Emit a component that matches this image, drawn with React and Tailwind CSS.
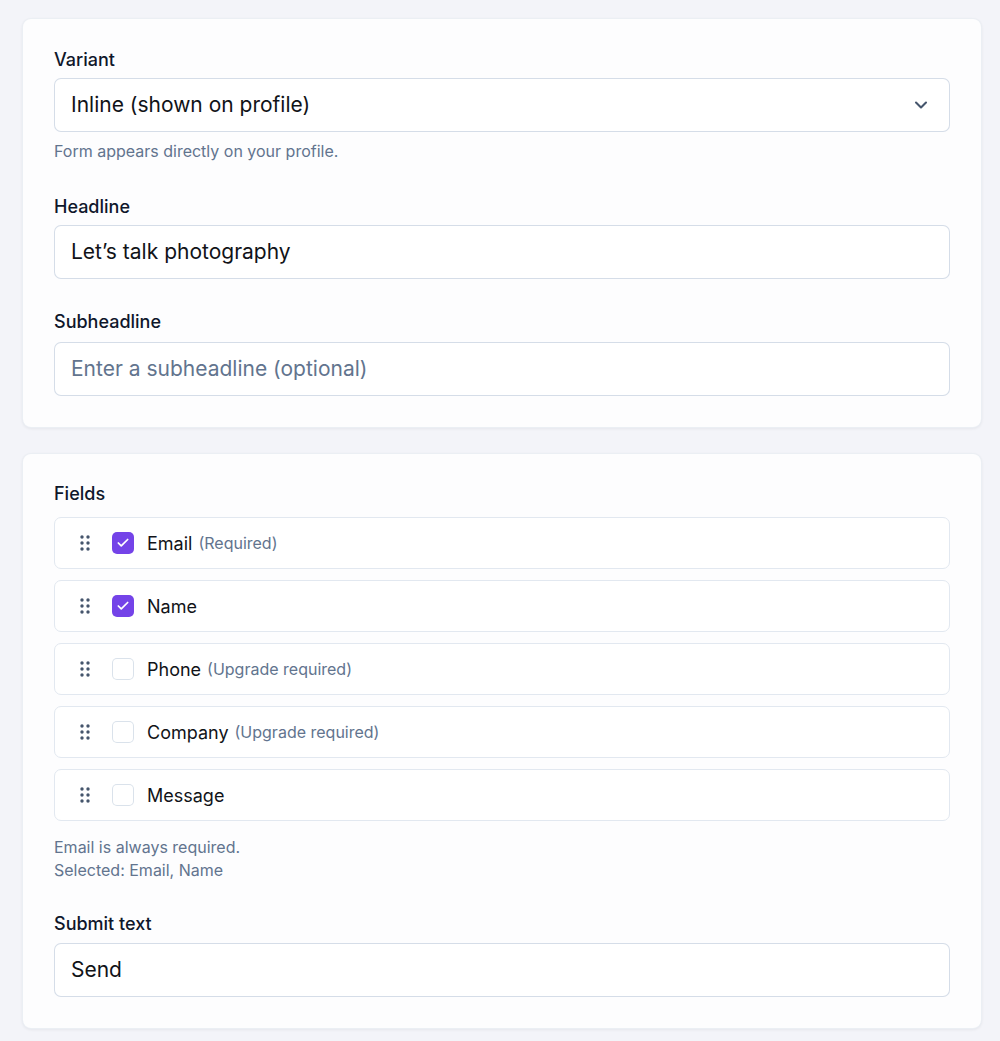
import { ChevronDown, Check } from "lucide-react";

const fields = [
  { name: "Email", note: "(Required)", checked: true },
  { name: "Name", checked: true },
  { name: "Phone", note: "(Upgrade required)", checked: false },
  { name: "Company", note: "(Upgrade required)", checked: false },
  { name: "Message", checked: false },
];

function Grip() {
  return (
    <svg width="10" height="16" viewBox="0 0 10 16" className="text-slate-600">
      {[2, 8, 14].map((y) =>
        [2, 8].map((x) => <circle key={`${x}-${y}`} cx={x} cy={y} r="1.7" fill="currentColor" />)
      )}
    </svg>
  );
}

function Label({ children, className = "mb-[6px]" }) {
  return <div className={`text-[18px] font-medium text-slate-900 leading-[24px] ${className}`}>{children}</div>;
}

function TextBox({ value, placeholder }) {
  return (
    <div className="h-[54px] rounded-[7px] border border-slate-300/80 bg-white px-[16px] flex items-center text-[21px]">
      {value ? <span className="text-[#111318]">{value}</span> : <span className="text-slate-500">{placeholder}</span>}
    </div>
  );
}

export default function App() {
  return (
    <div
      className="min-h-[1041px] bg-[#f3f4f9] px-[22px] pt-[18px] pb-[13px] flex flex-col gap-[25px] w-[1004px]"
      style={{ fontFamily: "Inter, 'Noto Sans', sans-serif" }}
    >
      <div className="bg-[#fdfdfe] rounded-[9px] border border-slate-200/70 shadow-[0_1px_3px_rgba(15,23,42,0.06)] px-[31px] pt-[29px] pb-[31px]">
        <Label>Variant</Label>
        <div className="h-[54px] rounded-[7px] border border-slate-300/80 bg-white pl-[16px] pr-[18px] flex items-center justify-between text-[21px] text-[#111318]">
          <span>Inline (shown on profile)</span>
          <ChevronDown className="w-[20px] h-[20px] text-slate-600" strokeWidth={2.5} />
        </div>
        <p className="text-[16px] text-slate-500 mt-[8px] leading-[22px]">Form appears directly on your profile.</p>

        <div className="mt-[33px]">
          <Label>Headline</Label>
          <TextBox value="Let’s talk photography" />
        </div>

        <div className="mt-[31px]">
          <Label className="mb-[8px]">Subheadline</Label>
          <TextBox placeholder="Enter a subheadline (optional)" />
        </div>
      </div>

      <div className="bg-[#fdfdfe] rounded-[9px] border border-slate-200/70 shadow-[0_1px_3px_rgba(15,23,42,0.06)] px-[31px] pt-[28px] pb-[31px]">
        <Label className="mb-[11px]">Fields</Label>
        <div className="flex flex-col gap-[11px]">
          {fields.map((f) => (
            <div
              key={f.name}
              className="h-[52px] rounded-[7px] border border-slate-200 bg-white flex items-center pl-[25px] pr-[16px]"
            >
              <Grip />
              <div
                className={
                  f.checked
                    ? "ml-[22px] w-[22px] h-[22px] rounded-[5px] bg-[#7443e8] flex items-center justify-center"
                    : "ml-[22px] w-[22px] h-[22px] rounded-[5px] border border-slate-300/70 bg-white"
                }
              >
                {f.checked && <Check className="w-[14px] h-[14px] text-white" strokeWidth={3} />}
              </div>
              <span className="ml-[13px] text-[18px] text-[#111318]">{f.name}</span>
              {f.note && <span className="ml-[6px] text-[16px] text-slate-500">{f.note}</span>}
            </div>
          ))}
        </div>
        <p className="text-[16px] text-slate-500 mt-[15px] leading-[23px]">
          Email is always required.
          <br />
          Selected: Email, Name
        </p>

        <div className="mt-[30px]">
          <Label className="mb-[7px]">Submit text</Label>
          <TextBox value="Send" />
        </div>
      </div>
    </div>
  );
}
